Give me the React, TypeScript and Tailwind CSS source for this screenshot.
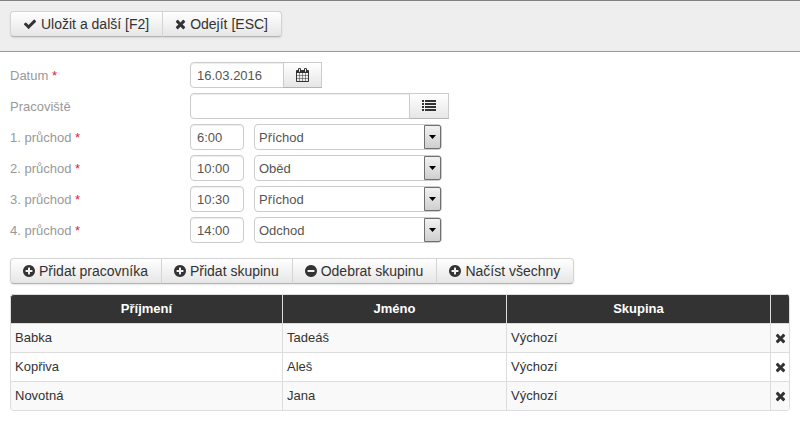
import React from "react";

// each glyph keeps its own width on a shared 14px line
const ICONS = {
  check: {
    box: "0 0 1792 1792",
    size: "w-3.5",
    path: "M1671 566q0 40-28 68l-724 724-136 136q-28 28-68 28t-68-28l-136-136-362-362q-28-28-28-68t28-68l136-136q28-28 68-28t68 28l294 295 656-657q28-28 68-28t68 28l136 136q28 28 28 68z",
  },
  times: {
    box: "192 0 1408 1792",
    size: "w-[11px]",
    path: "M1490 1322q0 40-28 68l-136 136q-28 28-68 28t-68-28l-294-294-294 294q-28 28-68 28t-68-28l-136-136q-28-28-28-68t28-68l294-294-294-294q-28-28-28-68t28-68l136-136q28-28 68-28t68 28l294 294 294-294q28-28 68-28t68 28l136 136q28 28 28 68t-28 68l-294 294 294 294q28 28 28 68z",
  },
  plus: {
    box: "128 0 1536 1792",
    size: "w-3",
    path: "M1344 960v-128q0-26-19-45t-45-19h-256v-256q0-26-19-45t-45-19h-128q-26 0-45 19t-19 45v256h-256q-26 0-45 19t-19 45v128q0 26 19 45t45 19h256v256q0 26 19 45t45 19h128q26 0 45-19t19-45v-256h256q26 0 45-19t19-45zm320-64q0 209-103 385.5t-279.5 279.5-385.5 103-385.5-103-279.5-279.5-103-385.5 103-385.5 279.5-279.5 385.5-103 385.5 103 279.5 279.5 103 385.5z",
  },
  minus: {
    box: "128 0 1536 1792",
    size: "w-3",
    path: "M1344 960v-128q0-26-19-45t-45-19h-768q-26 0-45 19t-19 45v128q0 26 19 45t45 19h768q26 0 45-19t19-45zm320-64q0 209-103 385.5t-279.5 279.5-385.5 103-385.5-103-279.5-279.5-103-385.5 103-385.5 279.5-279.5 385.5-103 385.5 103 279.5 279.5 103 385.5z",
  },
  calendar: {
    box: "64 0 1664 1792",
    size: "w-[13px]",
    path: "M192 1664h288v-288h-288v288zm352 0h320v-288h-320v288zm-352-352h288v-320h-288v320zm352 0h320v-320h-320v320zm-352-384h288v-288h-288v288zm736 736h320v-288h-320v288zm-384-736h320v-288h-320v288zm768 736h288v-288h-288v288zm-384-352h320v-320h-320v320zm-352-864v-288q0-13-9.5-22.5t-22.5-9.5h-64q-13 0-22.5 9.5t-9.5 22.5v288q0 13 9.5 22.5t22.5 9.5h64q13 0 22.5-9.5t9.5-22.5zm736 864h288v-320h-288v320zm-384-384h320v-288h-320v288zm384 0h288v-288h-288v288zm32-480v-288q0-13-9.5-22.5t-22.5-9.5h-64q-13 0-22.5 9.5t-9.5 22.5v288q0 13 9.5 22.5t22.5 9.5h64q13 0 22.5-9.5t9.5-22.5zm384-64v1280q0 52-38 90t-90 38h-1408q-52 0-90-38t-38-90v-1280q0-52 38-90t90-38h128v-96q0-66 47-113t113-47h64q66 0 113 47t47 113v96h384v-96q0-66 47-113t113-47h64q66 0 113 47t47 113v96h128q52 0 90 38t38 90z",
  },
  list: {
    box: "0 0 1792 1792",
    size: "w-3.5",
    path: "M0 128h256v256h-256zM384 128h1408v256h-1408zM0 512h256v256h-256zM384 512h1408v256h-1408zM0 896h256v256h-256zM384 896h1408v256h-1408zM0 1280h256v256h-256zM384 1280h1408v256h-1408z",
  },
};

type IconName = keyof typeof ICONS;

function Icon({ name }: { name: IconName }) {
  const icon = ICONS[name];
  return (
    <svg
      viewBox={icon.box}
      className={`h-3.5 shrink-0 fill-current ${icon.size}`}
      aria-hidden="true"
    >
      <path d={icon.path} />
    </svg>
  );
}

function ButtonGroup({ items }: { items: { icon: IconName; label: string }[] }) {
  return (
    <div className="inline-flex rounded shadow-[0_1px_2px_rgba(0,0,0,0.1)]">
      {items.map((item) => (
        <button
          key={item.label}
          type="button"
          className="-ml-px flex h-[26px] items-center gap-1 border border-[#d4d4d4] border-b-[#b3b3b3] bg-linear-to-b from-white to-[#e6e6e6] pr-[13px] pl-3 text-sm text-[#333] first:ml-0 first:rounded-l last:rounded-r"
        >
          <Icon name={item.icon} />
          {item.label}
        </button>
      ))}
    </div>
  );
}

function AddonButton({ icon, label }: { icon: IconName; label: string }) {
  return (
    <button
      type="button"
      aria-label={label}
      className="-ml-px flex h-[26px] items-center justify-center border border-[#ccc] border-b-[#b3b3b3] bg-linear-to-b from-white to-[#e6e6e6] px-3 text-[#333]"
    >
      <Icon name={icon} />
    </button>
  );
}

function Row(props: {
  id: string;
  label: string;
  required?: boolean;
  children: React.ReactNode;
}) {
  return (
    <div className="flex items-center">
      <label htmlFor={props.id} className="w-[180px] pt-px text-[#999]">
        {props.label}
        {props.required ? <span className="text-[#e02040]"> *</span> : null}
      </label>
      {props.children}
    </div>
  );
}

const inputStyle =
  "h-[26px] border border-[#ccc] bg-white px-1.5 text-[#555] shadow-[inset_0_1px_1px_rgba(0,0,0,0.075)] outline-none";

const passes = [
  { time: "6:00", kind: "Příchod" },
  { time: "10:00", kind: "Oběd" },
  { time: "10:30", kind: "Příchod" },
  { time: "14:00", kind: "Odchod" },
];

const workers = [
  { surname: "Babka", name: "Tadeáš", group: "Výchozí" },
  { surname: "Kopřiva", name: "Aleš", group: "Výchozí" },
  { surname: "Novotná", name: "Jana", group: "Výchozí" },
];

export default function App() {
  return (
    <div className="bg-white font-['Liberation_Sans',Arial,sans-serif] text-[13px] leading-5 text-[#333]">
      <header className="flex border-t border-b border-t-[#808080] border-b-[#999] bg-[#eee] px-2.5 pt-2.5 pb-3.5">
        <ButtonGroup
          items={[
            { icon: "check", label: "Uložit a další [F2]" },
            { icon: "times", label: "Odejít [ESC]" },
          ]}
        />
      </header>

      <main className="px-2.5 pt-2.5">
        <form className="flex flex-col gap-[5px]">
          <Row id="date" label="Datum" required>
            <input
              id="date"
              defaultValue="16.03.2016"
              className={`${inputStyle} w-[94px] rounded-l`}
            />
            <AddonButton icon="calendar" label="Kalendář" />
          </Row>
          <Row id="workplace" label="Pracoviště">
            <input
              id="workplace"
              className={`${inputStyle} w-[220px] rounded-l`}
            />
            <AddonButton icon="list" label="Seznam" />
          </Row>
          {passes.map((pass, i) => (
            <Row key={i} id={`pass-${i}`} label={`${i + 1}. průchod`} required>
              <input
                id={`pass-${i}`}
                defaultValue={pass.time}
                className={`${inputStyle} mr-2.5 w-[54px] rounded`}
              />
              <div className="relative w-[188px]">
                <select
                  aria-label={`${i + 1}. průchod`}
                  defaultValue={pass.kind}
                  className="block h-[26px] w-full appearance-none rounded border border-[#ccc] bg-white px-1 pt-px text-[#555] outline-none"
                >
                  <option>Příchod</option>
                  <option>Oběd</option>
                  <option>Odchod</option>
                </select>
                {/* drop-down arrow */}
                <span className="pointer-events-none absolute inset-y-px right-px flex w-[17px] items-center justify-center rounded-r-xs border border-[#707070] bg-linear-to-b from-[#f2f2f2] to-[#cfcfcf]">
                  <svg viewBox="0 0 7 4" className="h-1 w-[7px]" aria-hidden="true">
                    <path d="M0 0h7L3.5 4z" fill="#000" />
                  </svg>
                </span>
              </div>
            </Row>
          ))}
        </form>

        <div className="mt-[15px] flex">
          <ButtonGroup
            items={[
              { icon: "plus", label: "Přidat pracovníka" },
              { icon: "plus", label: "Přidat skupinu" },
              { icon: "minus", label: "Odebrat skupinu" },
              { icon: "plus", label: "Načíst všechny" },
            ]}
          />
        </div>

        <table className="mt-2.5 w-full table-fixed border-separate border-spacing-0 overflow-hidden rounded border-r border-b border-[#ddd]">
          <thead>
            <tr className="bg-[#333] text-white [&>th]:border-t [&>th]:border-l [&>th]:border-[#ddd] [&>th]:p-1">
              <th className="w-[272px] rounded-tl">Příjmení</th>
              <th className="w-[224px]">Jméno</th>
              <th>Skupina</th>
              <th className="w-[19px]" aria-label="Akce"></th>
            </tr>
          </thead>
          <tbody>
            {workers.map((worker) => (
              <tr
                key={worker.surname}
                className="odd:bg-[#f9f9f9] last:[&>td:first-child]:rounded-bl [&>td]:border-t [&>td]:border-l [&>td]:border-[#ddd] [&>td]:p-1"
              >
                <td>{worker.surname}</td>
                <td>{worker.name}</td>
                <td>{worker.group}</td>
                <td className="px-0!">
                  <button
                    type="button"
                    aria-label="Odebrat"
                    className="mx-auto flex h-5 items-center"
                  >
                    <Icon name="times" />
                  </button>
                </td>
              </tr>
            ))}
          </tbody>
        </table>
      </main>
    </div>
  );
}
